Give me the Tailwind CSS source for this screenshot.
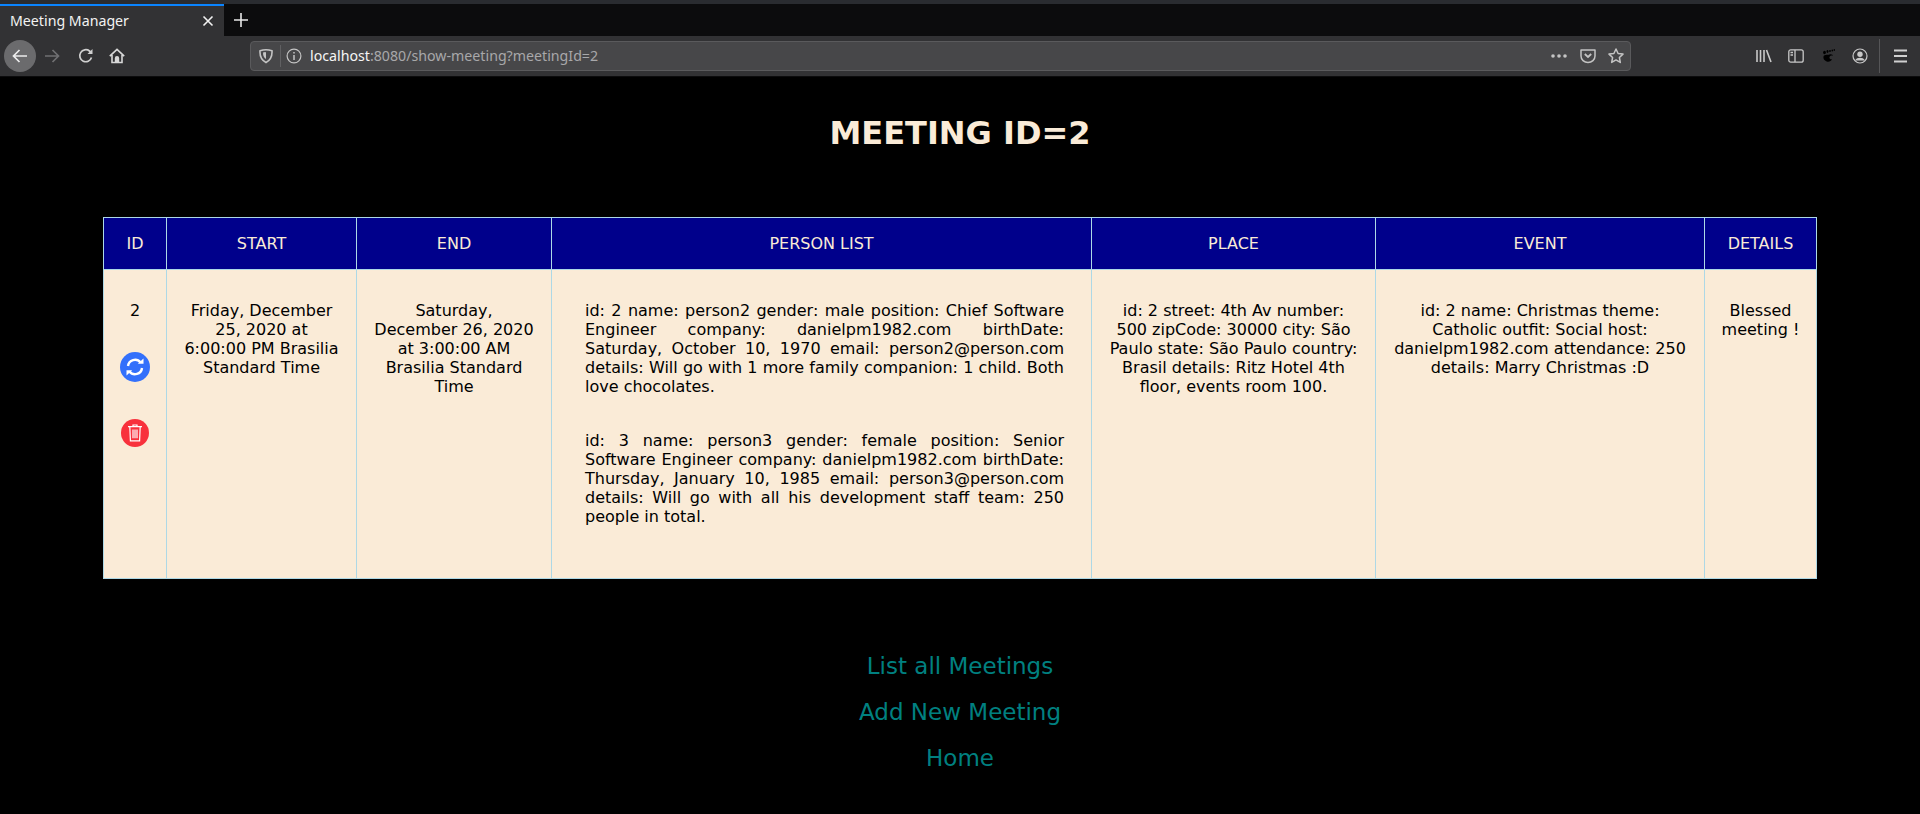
<!DOCTYPE html>
<html lang="en">
<head>
<meta charset="utf-8">
<title>Meeting Manager</title>
<script src="https://cdn.jsdelivr.net/npm/@tailwindcss/browser@4"></script>
</head>
<body class="bg-black h-screen overflow-hidden font-['DejaVu_Sans',sans-serif] text-base">
<!-- browser chrome -->
<div class="h-[77px] flex flex-col bg-[#323234] font-['Noto_Sans',sans-serif]">
  <div class="h-1 bg-[#2a2c30]"></div>
  <div class="h-8 bg-[#0c0c0d] flex">
    <div class="w-[224px] bg-[#323234] border-t-2 border-[#0a84ff] flex items-center pl-[10px] pr-[10px] text-[#f2f2f2] text-[14.2px] justify-between">
      <span>Meeting Manager</span>
      <svg class="w-3 h-3" viewBox="0 0 12 12" fill="none" stroke="#f2f2f2" stroke-width="1.6"><path d="M1.5 1.5l9 9M10.5 1.5l-9 9"/></svg>
    </div>
    <div class="w-[34px] flex items-center justify-center">
      <svg class="w-[14px] h-[14px]" viewBox="0 0 14 14" fill="none" stroke="#e8e8e8" stroke-width="1.6"><path d="M7 0v14M0 7h14"/></svg>
    </div>
  </div>
  <div class="h-10 flex items-center relative">
    <div class="w-[250px] flex items-center shrink-0 pl-[4px]">
      <div class="w-8 h-8 rounded-full bg-[#6b6b6d] flex items-center justify-center">
        <svg class="w-4 h-4" viewBox="0 0 16 16" fill="none" stroke="#ececec" stroke-width="1.7"><path d="M15 8H1.5M7.5 2L1.5 8l6 6"/></svg>
      </div>
      <svg class="w-4 h-4 ml-[8px]" viewBox="0 0 16 16" fill="none" stroke="#707072" stroke-width="1.7"><path d="M1 8h13.5M8.5 2l6 6-6 6"/></svg>
      <svg class="w-4 h-4 ml-[18px]" viewBox="0 0 16 16" fill="none" stroke="#d0d0d0" stroke-width="1.7"><path d="M13.5 9.5A6 6 0 1 1 11.5 3l2 1.8"/><path d="M14.5 1v5h-5" fill="#d0d0d0" stroke="none"/></svg>
      <svg class="w-4 h-4 ml-[15px]" viewBox="0 0 16 16" fill="none" stroke="#d8d8d8" stroke-width="1.6"><path d="M.8 8.2L8 1.3l7.2 6.9M3 7v7.500h10V7"/><path d="M6.600 14.500v-4.200a1.400 1.400 0 0 1 2.800 0v4.200" fill="#d8d8d8"/></svg>
    </div>
    <div class="w-[1381px] h-[30px] shrink-0 rounded bg-[#474749] border border-[#5a5a5c] flex items-center text-[14.2px]">
      <svg class="w-4 h-4 ml-[7px]" viewBox="0 0 16 16" fill="none" stroke="#c4c4c4" stroke-width="1.6"><path d="M2 2.800Q8 .8 14 2.800q.5 8.200-6 11.700Q1.500 11 2 2.800z"/><path d="M5 4.500q3-.8 3 0v6.500q-3-1.800-3-6.500z" fill="#c4c4c4" stroke="none"/></svg>
      <div class="w-px h-[22px] bg-[#606062] ml-[6px]"></div>
      <svg class="w-4 h-4 ml-[5px]" viewBox="0 0 16 16" fill="none" stroke="#c4c4c4" stroke-width="1.2"><circle cx="8" cy="8" r="6.900"/><path d="M8 7v5M8 4v1.500" stroke-width="1.500"/></svg>
      <span class="ml-2 text-[#f5f5f5]">localhost<span class="text-[#a8a8aa]">:8080/show-meeting?meetingId=2</span></span>
      <div class="ml-auto flex items-center pr-[6px]">
        <svg class="w-4 h-1" viewBox="0 0 16 4" fill="#c4c4c4"><circle cx="2" cy="2" r="1.800"/><circle cx="8" cy="2" r="1.800"/><circle cx="14" cy="2" r="1.800"/></svg>
        <svg class="w-4 h-4 ml-[13px]" viewBox="0 0 16 16" fill="none" stroke="#c4c4c4" stroke-width="1.500"><path d="M1 2h14v6a7 6.500 0 0 1-14 0z" stroke-linejoin="round"/><path d="M4.800 6l3.200 3 3.200-3" stroke-width="1.800"/></svg>
        <svg class="w-4 h-4 ml-[12px]" viewBox="0 0 16 16" fill="none" stroke="#c4c4c4" stroke-width="1.500"><path d="M8 1l2.100 4.500 4.900.6-3.600 3.400.9 4.900L8 11.900l-4.300 2.500.9-4.900L1 6.100l4.900-.6z" stroke-linejoin="round"/></svg>
      </div>
    </div>
    <div class="flex items-center flex-1 pl-[125px]">
      <svg class="w-4 h-4" viewBox="0 0 16 16" fill="none" stroke="#c8c8c8" stroke-width="1.600"><path d="M1 2v12M4.500 2v12M8 2v12M10.500 2l4.500 12"/></svg>
      <svg class="w-4 h-4 ml-[16px]" viewBox="0 0 16 16" fill="none" stroke="#c8c8c8" stroke-width="1.300"><rect x=".8" y="1.800" width="14.400" height="12.400" rx="2"/><path d="M7 2v12" /><path d="M2.500 4.500h2.500M2.500 7h2.500" /></svg>
      <svg class="w-4 h-4 ml-[16px]" viewBox="0 0 16 16" fill="#000"><path d="M9.500 6.500c2-.5 3.500.5 3.500 1.200-1.200-.4-2.800-.2-3.400 1-.7 1.400.4 2.800 2.400 2.600-.8 2-3.200 3-5.300 2.200C4.200 12.500 3 10.500 3.500 8.500 4 6.500 7 7 9.500 6.500z"/><ellipse cx="4.500" cy="4.500" rx="1.400" ry="1.800"/><ellipse cx="7.500" cy="3.500" rx="1" ry="1.400"/><ellipse cx="10" cy="3" rx=".9" ry="1.100"/><ellipse cx="12.300" cy="2.500" rx=".8" ry="1"/><ellipse cx="14.300" cy="2" rx=".7" ry=".9"/></svg>
      <svg class="w-4 h-4 ml-[16px]" viewBox="0 0 16 16" fill="none" stroke="#c8c8c8" stroke-width="1.200"><circle cx="8" cy="8" r="7"/><circle cx="8" cy="6.300" r="2.700" fill="#c8c8c8" stroke="none"/><path d="M3 12.500c1-2.200 3-2.800 5-2.800s4 .6 5 2.800" fill="#c8c8c8" stroke="none"/></svg>
      <div class="w-px h-[34px] bg-[#555557] ml-[11px]"></div>
      <svg class="w-4 h-4 ml-[13px]" viewBox="0 0 16 16" fill="none" stroke="#d0d0d0" stroke-width="1.800"><path d="M1 2.500h13M1 8h13M1 13.500h13"/></svg>
    </div>
  </div>
  <div class="h-px bg-[#0c0c0d]"></div>
</div>
<!-- page -->
<main class="pt-[37px] text-center">
  <h1 class="text-[32px] leading-[38px] font-bold text-[#faebd7]">MEETING ID=2</h1>
  <table class="mt-[65px] mx-auto w-[1713px] h-[362px] table-fixed border-collapse text-center">
    <thead>
      <tr class="h-[52px] bg-[#00008b] text-[#faebd7] font-normal">
        <th class="w-[63px] border border-[#add8e6] font-normal">ID</th>
        <th class="w-[190px] border border-[#add8e6] font-normal">START</th>
        <th class="w-[195px] border border-[#add8e6] font-normal">END</th>
        <th class="w-[540px] border border-[#add8e6] font-normal">PERSON LIST</th>
        <th class="w-[284px] border border-[#add8e6] font-normal">PLACE</th>
        <th class="w-[329px] border border-[#add8e6] font-normal">EVENT</th>
        <th class="w-[112px] border border-[#add8e6] font-normal">DETAILS</th>
      </tr>
    </thead>
    <tbody>
      <tr class="bg-[#faebd7] text-black leading-[19px] align-top">
        <td class="border border-[#add8e6] pt-[31px]">
          <div>2</div>
          <div class="mt-[32px] mx-auto w-[30px] h-[30px] rounded-full bg-[#3370fb] flex items-center justify-center">
            <svg class="w-[20px] h-[20px]" viewBox="0 0 20 20" fill="none" stroke="#fff" stroke-width="2.400"><path d="M3 9a7 7 0 0 1 12.500-3.500"/><path d="M17 11a7 7 0 0 1-12.500 3.500"/><path d="M12.800 6.800h5.700V1.500z" fill="#fff" stroke="none"/><path d="M7.200 13.200H1.500v5.300z" fill="#fff" stroke="none"/></svg>
          </div>
          <div class="mt-[37px] mx-auto w-[28px] h-[28px] rounded-full bg-[#f8313c] flex items-center justify-center">
            <svg class="w-[16px] h-[18px]" viewBox="0 0 16 18" fill="none" stroke="#fff" stroke-width="1.200"><path d="M1 2.600h14M6 2.600V1h4v1.600M2.800 2.600l.6 14.200h9.200l.6-14.200M6 5.500v8.800M8 5.500v8.800M10 5.500v8.800"/></svg>
          </div>
        </td>
        <td class="border border-[#add8e6] pt-[31px] px-4">Friday, December 25, 2020 at 6:00:00 PM Brasilia Standard Time</td>
        <td class="border border-[#add8e6] pt-[31px] px-4">Saturday, December 26, 2020 at 3:00:00 AM Brasilia Standard Time</td>
        <td class="border border-[#add8e6] pt-[31px] pl-[33px] pr-[27px] text-justify">
          <p>id: 2 name: person2 gender: male position: Chief Software Engineer company: danielpm1982.com birthDate: Saturday, October 10, 1970 email: person2@person.com details: Will go with 1 more family companion: 1 child. Both love chocolates.</p>
          <p class="mt-[35px]">id: 3 name: person3 gender: female position: Senior Software Engineer company: danielpm1982.com birthDate: Thursday, January 10, 1985 email: person3@person.com details: Will go with all his development staff team: 250 people in total.</p>
        </td>
        <td class="border border-[#add8e6] pt-[31px] px-4">id: 2 street: 4th Av number: 500 zipCode: 30000 city: São Paulo state: São Paulo country: Brasil details: Ritz Hotel 4th floor, events room 100.</td>
        <td class="border border-[#add8e6] pt-[31px] px-4">id: 2 name: Christmas theme: Catholic outfit: Social host: danielpm1982.com attendance: 250 details: Marry Christmas :D</td>
        <td class="border border-[#add8e6] pt-[31px] px-4">Blessed meeting !</td>
      </tr>
    </tbody>
  </table>
  <nav class="mt-16 flex flex-col items-center text-[23px] leading-[46px] text-[#008080]">
    <a href="#">List all Meetings</a>
    <a href="#">Add New Meeting</a>
    <a href="#">Home</a>
  </nav>
</main>
</body>
</html>
